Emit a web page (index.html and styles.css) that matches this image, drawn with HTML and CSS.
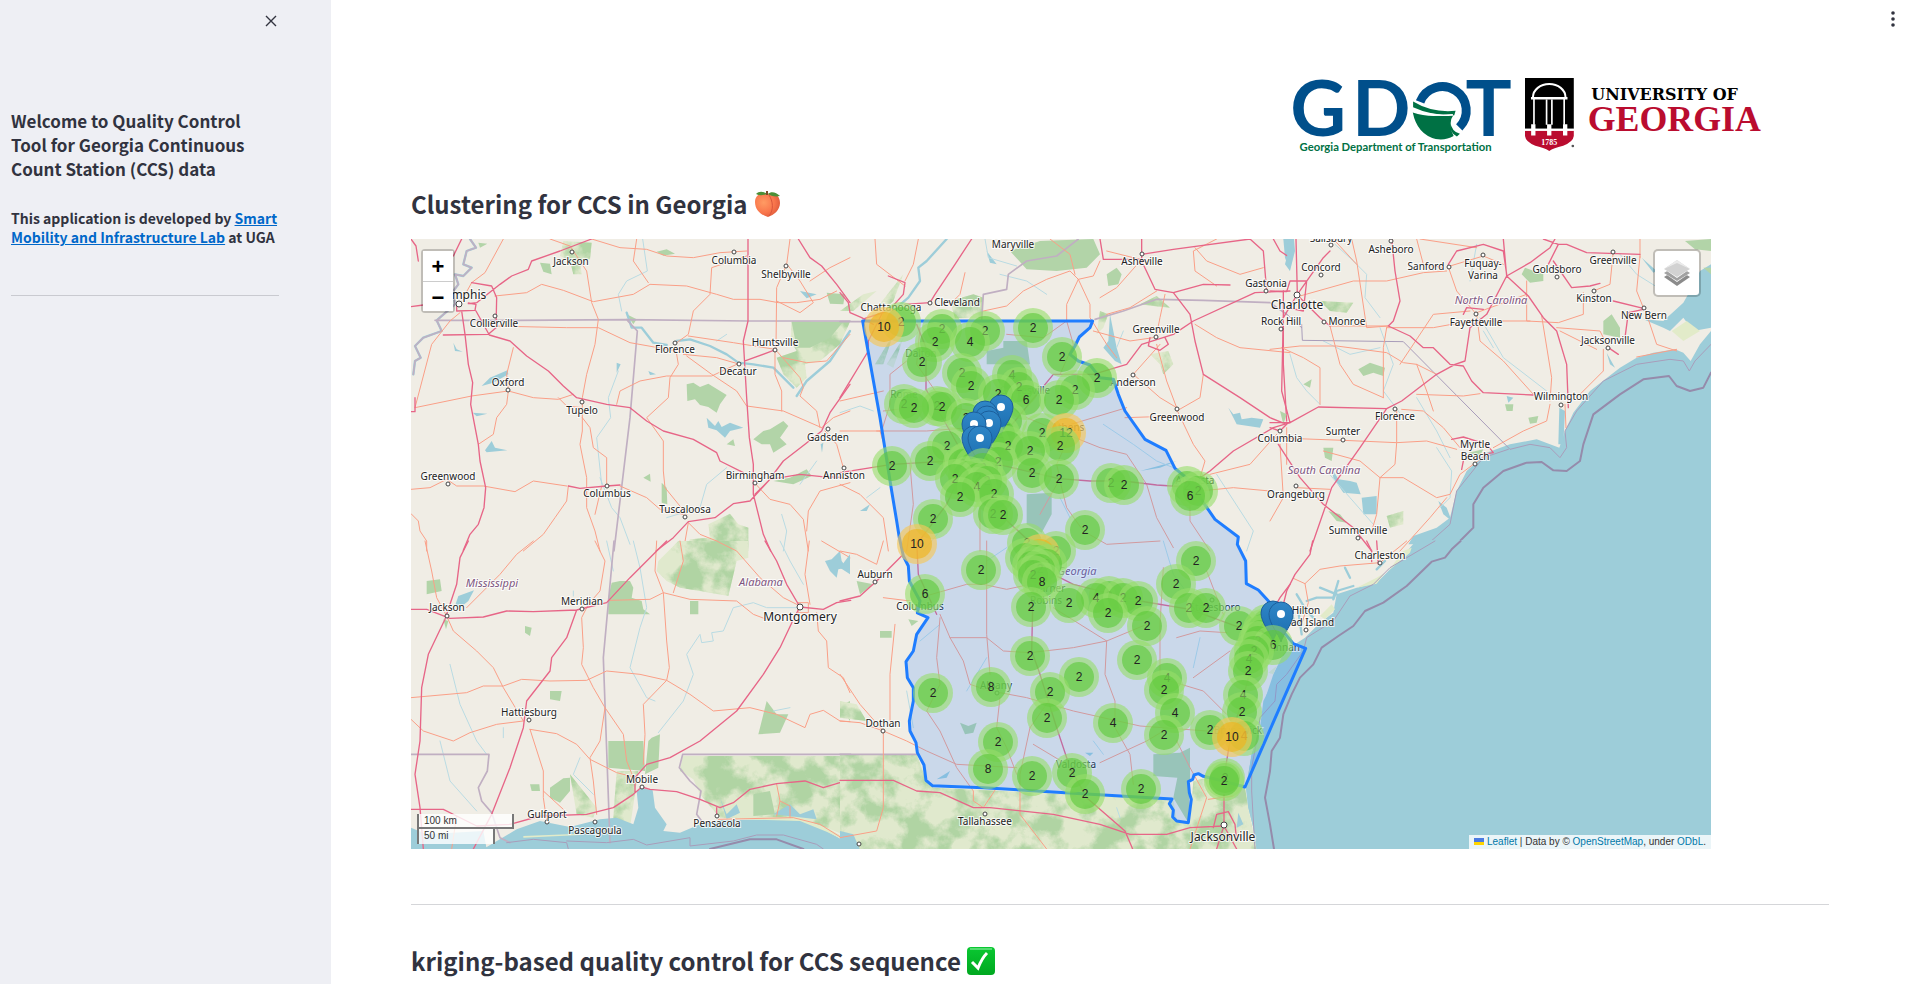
FILE: index.html
```html
<!DOCTYPE html>
<html lang="en">
<head>
<meta charset="utf-8">
<title>Quality Control Tool for Georgia CCS data</title>
<meta name="viewport" content="width=device-width, initial-scale=1">
<link rel="stylesheet" href="styles.css">
</head>
<body>
<div class="app">
  <aside class="sidebar">
    <div class="sidebar-top">
      <button class="icon-button" type="button" aria-label="Close sidebar">
        <svg viewBox="0 0 12 12" width="12" height="12"><path d="M1 1 11 11M11 1 1 11" stroke="#31333f" stroke-width="1.4" fill="none"/></svg>
      </button>
    </div>
    <div class="sidebar-body">
      <h2 class="sidebar-title">Welcome to Quality Control Tool for Georgia Continuous Count Station (CCS) data</h2>
      <p class="credit">This application is developed by <a href="#lab">Smart Mobility and Infrastructure Lab</a> at UGA</p>
      <hr class="rule">
    </div>
  </aside>

  <main class="main">
    <div class="toolbar">
      <button class="icon-button" type="button" aria-label="Main menu">
        <svg viewBox="0 0 4 16" width="4" height="16" fill="#31333f"><circle cx="2" cy="2" r="1.8"/><circle cx="2" cy="8" r="1.8"/><circle cx="2" cy="14" r="1.8"/></svg>
      </button>
    </div>

    <div class="content">
      <div class="logos">
        <svg class="logo-gdot" viewBox="36 36 650 235" role="img" aria-label="GDOT">
          <g class="gdot-letters"><text x="32" y="215">G</text><text x="218" y="215">D</text><text x="560" y="215">T</text></g>
          <path d="M423 111A72 72 0 1 1 541 188" fill="none" stroke="#004f8b" stroke-width="27"/>
          <path d="M402 110Q460 145 530 138L526 151Q455 152 402 127Z" fill="#007144"/>
          <path d="M401 143Q455 162 526 146Q504 176 524 214Q500 228 470 223Q414 208 401 143Z" fill="#007144"/>
          <path d="M514 172Q518 200 543 207L534 215Q510 204 514 172Z" fill="#007144"/>
          <path d="M402 134Q450 156 522 150" fill="none" stroke="#fff" stroke-width="5"/>
          <text class="gdot-name" x="60" y="259">Georgia Department of Transportation</text>
        </svg>
        <svg class="logo-uga" viewBox="734 36 710 235" role="img" aria-label="University of Georgia">
          <path d="M735 39H882V192H735Z"/>
          <path d="M735 198H882V214Q880 232 850 243Q820 250 808 259Q796 250 766 243Q737 232 735 214Z" fill="#ba0c2f"/>
          <g fill="none" stroke="#fff">
            <path d="M735 195H882" stroke-width="6"/>
            <path d="M759 97A49 40 0 0 1 857 97" stroke-width="6"/>
            <path d="M753 100H863" stroke-width="7"/>
            <path d="M762 100V180M853 100V180M800 104V180M816 104V180" stroke-width="5"/>
            <path d="M760 178V212M808 178V212M856 178V212" stroke-width="13"/>
          </g>
          <text class="uga-year" x="808" y="241">1785</text>
          <circle cx="879" cy="244" r="4" fill="#555"/>
          <text class="uga-top" x="935" y="104">UNIVERSITY OF</text>
          <text class="uga-main" x="924" y="200">GEORGIA</text>
        </svg>
      </div>

      <h1 class="heading">Clustering for CCS in Georgia
        <svg class="emoji" viewBox="0 0 28 28" role="img" aria-label="peach">
          <defs><radialGradient id="peach" cx=".35" cy=".4" r=".7"><stop offset="0" stop-color="#ff9b63"/><stop offset=".6" stop-color="#f9764c"/><stop offset="1" stop-color="#dd5a3c"/></radialGradient></defs>
          <path d="M14 4C20 1 26 6 26 13C26 20 20 25 14 27C7 25 1 20 1 12C1 5 8 1 14 4Z" fill="url(#peach)"/>
          <path d="M15 5C19 11 20 20 15 26" stroke="#d9553b" fill="none"/>
          <path d="M13 4C9 1 5 1 2 4C6 6 10 5 13 4ZM14 4C17 1 22 2 26 6C21 7 17 6 14 4Z" fill="#4c8f37"/>
          <path d="M13 5V1" stroke="#7b4b2a" stroke-width="2"/>
        </svg>
      </h1>

      <div class="map">
        <svg class="map-canvas" viewBox="0 0 1300 610" preserveAspectRatio="xMidYMid slice" role="img" aria-label="Map of count stations in Georgia">
          <defs>
            <filter id="woods" x="0" y="0" width="1" height="1" color-interpolation-filters="sRGB">
              <feTurbulence type="fractalNoise" baseFrequency=".012" numOctaves="5" seed="7"/>
              <feColorMatrix values="0 0 0 0 .69  0 0 0 0 .83  0 0 0 0 .64  5 0 0 0 -2.1"/>
              <feComposite in2="SourceAlpha" operator="in" result="trees"/>
              <feMerge><feMergeNode in="SourceGraphic"/><feMergeNode in="trees"/></feMerge>
            </filter>
            <linearGradient id="pin-fill" x2="0" y2="1"><stop offset="0" stop-color="#2f86c7"/><stop offset="1" stop-color="#1a6cae"/></linearGradient>
          </defs>
          <rect width="1300" height="610" fill="#f0ede5"/>

          <g class="tile" transform="translate(-11 -8) scale(.33333)">
            <path class="woodland" d="M1175 272H1350L1320 340 1260 390 1215 400 1220 440 1190 470 1150 430 1130 380 1190 360 1172 330ZM925 880L990 848 1015 880 1045 890V960H850L870 925 930 920ZM490 30L575 35 570 85 540 90 545 130 520 130 510 90 480 75Z"/>
            <path class="wood" d="M420 95L450 98 455 130 430 122ZM770 62L800 55 825 68 790 74ZM235 35L262 38 240 50ZM1175 272H1330L1290 320 1230 350 1190 350ZM860 460L880 455 900 468 925 458 980 492 960 520 950 545 925 528 900 522 885 505 862 510ZM1280 185L1335 190 1330 220 1290 218ZM1090 600L1110 595 1150 570 1165 585 1140 620 1160 640 1120 665 1110 640 1085 640 1060 625ZM785 755L800 770 802 820 785 815ZM1120 750L1170 740 1220 715 1235 735 1180 760ZM730 740L750 728 752 752ZM680 250L710 265 700 280ZM980 640L1000 625 1005 645Z"/>
            <path class="lake" d="M245 465L270 440 322 418 325 430 280 455ZM160 335L170 355 188 362 165 360ZM218 545L262 548 230 556ZM255 658L275 630 285 650 322 658 260 664ZM650 395L662 400 650 425ZM920 560L945 585 955 570 965 588 990 575 1030 590 990 600 975 620 950 598 925 590ZM1200 180L1250 190 1220 202ZM745 420L768 430 750 432ZM1262 640L1270 635 1266 665Z"/>
            <path class="river" d="M728 24L742 120 680 150 655 190 665 240M655 420L625 500 632 560 590 620 605 760M600 740L635 830 660 860 690 940M980 710L920 760 900 830 800 860M1250 690L1200 760M1145 850L1160 900 1150 960M980 310L950 330"/>
            <path class="river wide" d="M680 245L695 290 725 290 760 335 800 342M830 330L870 325 930 345 980 370 1015 395 1060 400 1120 410 1180 470"/>
            <path class="river wide" d="M1190 495L1220 450 1290 390 1350 300M210 24L228 50 200 60 190 100 215 110 190 135 165 130 175 160 160 180 165 220 110 268 125 300 70 320 45 345 62 380 45 390 40 430"/>
            <path class="border" d="M210 24L228 50 200 60 190 100 215 110 190 135 165 130 175 160 160 180 165 220 110 268 125 300 70 320 45 345 62 380 45 390 40 430M105 268H345L680 266 1045 270H1350M680 266L712 300 690 560 642 960"/>
            <path class="trunk" d="M310 24L255 125 215 155 190 200M180 245L150 270 95 340 45 530M285 195L380 185 425 160 490 178 580 212 700 190 750 160 860 165 950 190 1000 205 1080 205 1135 215 1190 215 1260 205 1310 180M450 24L510 45 560 120 575 215 595 265 585 340 560 430 547 500V600L540 640 560 740V830L585 900 600 960M575 24L660 50 740 55 800 75 880 80 960 65 1040 60M710 24L700 90 745 155M280 285L500 290 595 290 690 335 830 360M45 530L215 495 325 480 400 500 475 505 520 490M340 350L320 430 325 480 320 520 290 560 280 610 235 640M1040 75L935 110 930 190 880 240 865 310 830 335M865 315L1000 335 1125 355M830 370L835 400 810 440 805 500 740 560 790 630V720L795 770 860 850M650 520L660 480 720 450 800 435 935 435 1010 400M850 370L950 380 1020 400M860 375L935 430 1010 480 1040 525 1150 540 1265 590M1125 360V430L1145 480V540M1130 360L1200 440 1210 470 1200 495 1250 540 1260 590M1170 24L1160 100 1130 170 1128 350M33 775L90 770 140 745 170 765 250 765 345 782 400 750 500 765M505 765L500 810 465 860 430 910 370 960M33 848L55 870 60 900 80 930V960M547 560L570 590 580 650 620 680V765M660 765L740 800 780 835 850 850M605 765L585 850M475 500L500 525 547 530M865 875L850 960M865 875L900 910 1000 950M1065 757L1110 805 1170 820 1210 865 1225 960M1275 600L1310 640 1330 710M1350 755L1260 780 1225 840 1220 900M1130 210L1200 245 1240 215 1200 150 1165 105M1350 80L1290 110 1230 150M1150 380L1220 395 1280 390 1350 310M1265 590L1300 560 1350 540"/>
            <path class="motorway" d="M33 24L48 45 55 90M185 24L160 75M205 218L230 215 300 160 335 135 385 115 395 90 480 60 575 24M215 155L275 165 290 200 288 290 265 310 130 312M33 227L70 222M170 222V240L225 238 228 220 205 216M185 240L195 310 205 400 218 455 212 520 235 640 240 690 257 770 252 830 235 880 210 910 190 958M228 240L268 312 330 330 380 375 445 420 490 465 530 500 620 520 690 530 740 570 790 600 880 625 950 665 960 690 1030 725M1044 24V270L1030 330 1040 500 1048 620 1060 700V790L1070 830 1090 910 1112 960M1350 460L1290 545 1265 600 1215 640 1150 690 1105 750 1050 810 1000 818 945 860 865 872 820 920 768 960M1065 790L1110 745 1200 730 1265 737 1350 740M1195 24L1230 80 1265 105 1310 160 1350 215M505 765L540 772 620 765 660 762M1035 390L1125 357M45 500V542H33"/>
          </g>

          <g class="tile" transform="translate(429 -8) scale(.33333)">
            <path class="wood" d="M510 60L600 30 760 24 780 70 740 110 650 120 560 115ZM800 130L830 110 845 130 835 160 805 165ZM440 360L490 350V330H560L570 400H440ZM560 790L635 785V850L605 905 560 880Z"/>
            <path class="woodland" d="M330 210L400 190 430 200 425 260 345 262ZM95 250L190 130 160 210 110 262ZM780 240L805 250 790 290 770 310ZM0 240L70 190 110 180 40 240ZM105 400L160 310 130 400ZM140 400L190 320 160 410ZM930 370L985 360 1000 400 970 430 960 400ZM900 220L950 195 990 230 940 225Z"/>
            <path class="lake" d="M1165 530L1180 550 1200 545 1205 565 1235 560 1270 565 1260 590 1190 580ZM900 720L1010 690 960 710ZM810 250L830 350 845 400 825 390 790 350 805 330ZM1330 24H1350V120L1335 80ZM440 60L470 100 450 95ZM60 840L90 820 80 840Z"/>
            <path class="river wide" d="M320 24L260 90 235 110 240 150 205 200 170 230"/>
            <path class="river" d="M435 24L445 80 530 105M480 130L560 150 620 190M790 580L880 640 950 690 1005 712M830 350L850 300M0 545L60 525 100 540M80 800L120 770M250 960L300 900M660 800L690 860M1130 730L1240 900 1220 960"/>
            <path class="border" d="M0 272H70M425 268L430 190 500 175 505 130 560 90 650 75 715 24M765 265L850 240 950 205 1090 208 1290 215 1340 250"/>
            <path class="trunk" d="M105 24L110 100 195 165M235 24L220 100 195 150M375 125L360 190 330 220M430 240L500 225 550 180 620 145 690 120 715 145 760 135 780 90M715 145L680 220V270L700 340 660 430M715 145L750 220V260L800 340 830 380M630 24L690 70 705 130M800 60L900 85M1130 24L1060 60 1065 120 1130 165M950 180L870 230 800 250M975 190L960 260 950 310M950 340L980 450 1010 530M1090 430L1080 500 1010 540M880 430L960 500 1010 530M1065 280L1130 320 1200 350 1350 365M855 560L1010 555M1010 535L1060 640 1095 690 1080 740M560 560L680 610 780 650 860 670 920 760 950 860 1000 950M200 390L150 430V520L125 600H0M110 600L260 600 390 590M0 510L130 480M0 760L60 790 130 860 145 960M210 700L220 820 200 960M420 830V960M660 750L680 830 730 900 800 940 960 930M1050 810V870L1110 960M1080 780L1180 770 1290 780M1340 590V700M1310 610L1230 700 1110 730M130 540L300 520 480 560M660 590L860 530M240 290L230 400 300 500M500 310L610 320 680 270M905 85L830 170 780 200M1065 50L1100 90 1200 130 1270 110M150 700L120 600M760 300L870 330 940 320M960 340L880 430M700 590L650 700 660 743 600 850"/>
            <path class="motorway" d="M395 24L345 100 285 190 270 215 195 220M145 135L195 155 190 190 145 240 75 262M0 185L25 215 30 245 65 260 100 280M130 240L85 330V360L0 500M230 280L258 350V475L330 600 380 690M905 24V90L945 175 1000 185 1090 160 1170 162M1350 180L1245 185 1060 270 1000 310 905 340 860 400 760 430 640 430 500 600 380 690M1000 185L1050 250 1065 330 1090 430 1200 500 1290 560 1340 580M780 24L790 85 905 85M905 70L1000 55 1230 24M1230 24L1270 60 1280 180M1330 180V400L1340 570M1350 575L1300 590 1180 660 1110 720 1040 768 950 762 850 750H750L657 743 475 700 330 690 155 700 0 725M930 320L925 345 960 358 985 340 975 320M380 690L320 820 230 940M420 700L480 850 600 960M1300 24L1320 60 1350 80"/>
          </g>

          <g class="tile" transform="translate(859 -8) scale(.33333)">
            <path class="ocean" d="M1323 300L1290 340 1262 390 1240 365 1215 355 1150 365 1100 380 1050 410 960 480 910 545 885 600 868 650 800 625 720 640 650 665 590 720 560 780 540 860 500 890 430 915 415 940H1323Z"/>
            <path class="ocean" d="M1323 100L1290 120 1260 180 1240 215 1180 270 1120 265 1180 290 1200 300 1240 260 1270 300 1323 290ZM1115 80L1160 120 1150 125ZM50 24H72L75 60 60 120 45 100 55 60ZM185 710L205 745 240 750 260 755 272 790 220 785 190 740ZM275 800L320 795V850L280 850ZM710 495L730 500 715 515ZM505 810L530 830 545 870 520 850ZM1010 365L1035 410 1020 400ZM868 530L885 540 880 640 865 640Z"/>
            <path class="wood" d="M765 110L820 130V150L780 155 755 130ZM1000 270L1025 250 1050 290V320L1000 310ZM265 415L300 395 345 410 340 435 310 425 280 435ZM160 650L190 650 185 690 165 680ZM775 560L805 555 800 575 780 578ZM1245 30L1323 24V60L1275 55ZM705 520L730 520 728 540 710 540ZM595 665L640 655 630 675ZM100 460L125 445 120 470ZM175 840L210 850 230 875 200 870ZM30 540L50 550 40 580ZM1300 110L1323 110V130Z"/>
            <path class="woodland" d="M350 855L400 840V880L360 890ZM150 210L250 215 230 245 180 240Z"/>
            <path class="sand" d="M1205 300L1250 270 1290 300 1240 330Z"/>
            <path class="river" d="M195 40L250 90 290 130 285 200 330 260M330 290L370 400 340 480 400 560M620 40L600 150M630 260L700 380 830 480M60 370L80 440 110 480 150 520M500 650L545 720 540 800 510 830M1050 70L1100 130 1180 180M440 500L500 600 540 680M160 330L240 370 330 350M640 300L670 350M310 880L240 800 170 720"/>
            <path class="border thin" d="M95 280L97 328 400 332 720 655 780 640 840 650 870 680 890 650 885 600 920 540 1000 450 1100 400 1200 385 1240 390 1258 420 1275 390 1323 340M715 655L640 680 560 780 540 880 450 960M45 245L95 290"/>
            <path class="border sea" d="M545 958L570 930 610 890V820L640 770 700 720 770 695 815 693 850 718 890 720 930 690 940 640 970 550 1050 490 1120 445 1197 435 1220 465 1260 480 1300 470 1323 425"/>
            <path class="trunk" d="M90 195L250 150 350 150 460 125 530 120M245 24L260 90 290 290 355 285M440 24L460 100 520 110M535 108L560 180 615 245M620 250L630 330 700 390 790 490M770 150V270L865 275 940 250V185M1110 75L1100 180 1120 230M1125 235L1160 340 1220 360M1220 355L1100 378M1000 355V420L930 490M860 290L990 300 1015 350M640 270L780 270M0 355L90 345 200 345 350 365 400 395 440 400 500 430M180 285L210 400 250 460 340 500M350 290L340 350V500M35 350L100 380 150 410V520M0 620L220 628 380 635 470 630 560 655M380 535V635L375 700 330 740M395 535L460 540 520 590 570 650M440 490L580 495 630 488M840 520L830 570 760 600 670 650M160 660L270 690 330 740 400 740 500 800 540 790 570 730 650 670M80 770L180 775M330 740L320 850 305 900M885 520L888 590M0 870L40 800 30 640M440 400L470 480 490 540M530 800L480 860 390 960M390 400L490 250 600 240M180 285L355 285M620 245L770 190M540 105L640 75 700 100M350 290L490 290 600 270M815 255L845 440 840 510M190 24L260 100M450 24L620 50M1030 60L1020 160 970 180M980 355L870 300M1110 24V80"/>
            <path class="motorway" d="M78 24L82 190 40 260 35 480 60 575M0 575H60L145 528 350 533 395 510 500 430 555 400 585 390 600 290 650 250 710 135 780 95 840 50 855 24M365 24L375 120 390 210 370 270 355 285 420 315 460 350 490 350 540 400 580 405 605 450 640 485 790 492M350 533L270 650 185 770 165 830 120 960M700 24L710 135 775 195 820 260 860 300 890 400 895 530M865 40H890L950 65 1110 70M835 100L865 40 820 24M535 100L560 60 640 40 700 60 710 130M25 640L90 740 160 820 250 890 305 960M0 180L50 182 60 150 110 150 100 240 50 230M82 190L160 80 180 60M90 200L150 260 180 285M850 90L905 170 960 165 990 157M1030 210L1120 232M1120 235L1075 245 1065 320M545 625L580 618 650 640 670 665 640 670M1045 370L1015 350M0 590L30 600 50 580M580 250L590 230 640 235M580 690L575 715"/>
          </g>

          <g class="tile" transform="translate(-11 302) scale(.33333)">
            <path class="woodland" d="M848 645H1352V890L1280 860 1200 835 960 830 900 760 880 715 840 690Z"/>
            <path class="woodland" d="M835 0H1045V50L1010 60 985 165 900 150 840 140 800 120 770 90 775 60ZM650 690H715L690 860 640 830ZM510 700L590 800 580 830 530 820Z"/>
            <path class="wood" d="M635 125L660 120 690 120 700 140 695 170 725 180 730 205 750 220H625V170ZM870 180H895V220H870ZM625 600L730 600 735 690 625 680ZM745 600L755 590 780 580 775 680 735 700ZM450 740L490 712 510 710V750L480 785 450 770ZM390 730H418L420 750H395ZM1080 560L1100 480 1130 520 1165 520 1140 575 1075 580ZM450 450L485 450 480 480 450 475ZM375 255L395 260 390 285 375 275ZM80 120L120 115 125 150 80 160ZM1320 495L1350 480V540ZM33 870L60 890V924H33ZM130 235L145 240 138 265ZM1060 760L1110 750 1125 820 1060 825Z"/>
            <path class="ocean" d="M250 924L350 865 420 840 510 858 600 835 650 830 700 850 715 800 710 750 725 742 758 748 765 800 800 850 790 870 840 875 900 850 960 838 1100 835 1200 838 1280 870 1350 910V926H320ZM33 860L80 880 250 870 260 924H33ZM165 195L175 165 222 148 205 180 180 200ZM1275 60L1295 55 1320 30 1325 60 1340 80 1315 85 1310 110 1290 90ZM960 770L980 820 1010 790 1020 815 980 835ZM1120 820L1170 790 1200 820 1240 805 1250 835ZM1335 870H1350V890Z"/>
            <path class="sand" d="M960 832L1100 828 1200 830 1290 865 1350 900V906L1280 872 1200 840 1100 837ZM370 885L540 878V882L370 890Z"/>
            <path class="river" d="M700 0L720 80 740 200 720 260 690 380 740 470 765 480M775 575L850 480 880 400 860 340 900 280 905 305 940 300 935 275 970 270 1000 200 1060 185 1100 200 1190 200M150 370L180 490 230 600 260 640M120 600L150 720 230 810M540 650L520 700 580 760M1140 0L1170 60 1210 130M620 0L640 90M1170 500L1120 510M310 560V590M520 150V165"/>
            <path class="border" d="M642 0L610 350 630 905M33 640H267L262 690 235 740 245 780 275 815 300 890 330 905M848 640H1352M848 640L838 680 870 720 903 750 890 820 905 840"/>
            <path class="border thin" d="M320 905L400 895 500 905 505 924M500 900L620 905 700 895 740 912 870 890V915L1000 900 1070 882 1150 882 1250 910 1270 924"/>
            <path class="border sea" d="M930 924L1050 895 1130 895 1210 924"/>
            <path class="trunk" d="M75 0L95 90 110 170 140 225 160 270 230 330 280 380 310 440 370 540M400 0L350 40 300 100 200 200M585 0L615 60 600 150 565 190 545 230 550 320 545 370 580 440 615 500 600 600 570 650 580 720 590 820M33 470L200 455 250 435 310 435 365 415 450 420 560 418 620 390 720 400 800 418 870 460 940 510 1050 500 1130 520 1215 560 1230 520 1270 508 1320 540 1350 542M630 178L750 175 790 155 870 175 1010 180 1060 220 1100 235M770 0L765 90 790 155 800 300 808 380 800 418 730 490 735 580 730 670M840 0L850 60 820 155M950 0L1010 30 1080 110 1150 170 1190 190M33 535L70 570 160 600 210 575 290 550 370 540M390 565L470 578 530 610 570 655 650 695 710 710M390 565L430 690V770L440 840M430 750L490 805M615 500L670 580 680 660 700 710M1228 0L1215 100 1230 190M1250 215L1255 270 1280 300 1285 380 1330 410 1350 455M955 835L1180 830 1260 850 1350 906M1130 730L1140 780 1130 825M1140 780L1170 795V830M1265 0L1350 50M170 825L155 924M1195 185H1225V215H1195Z"/>
            <path class="motorway" d="M205 0L180 50 170 130 150 190 135 235 85 340 65 440 60 600 45 700 60 800 70 924M33 205H80L150 232 250 228 320 210 400 212 530 207 620 185 690 110 800 0M530 207L500 290 455 350 450 390 380 480 370 560 330 680 275 820 220 924M33 805H130L170 825 230 855 330 850 420 825 560 820 640 800 700 760 725 738 750 745 830 752 900 775 960 800 1000 785 1050 745 1130 728 1215 720 1270 740 1352 715M705 755V710L740 670 810 650 900 600 1010 510 1090 400 1140 320 1185 225 1200 198 1160 130 1130 60 1095 0M1200 198L1270 205 1310 185 1352 178M950 800V825"/>
          </g>

          <g class="tile" transform="translate(429 302) scale(.33333)">
            <path class="woodland" d="M0 640H230L260 720 280 740 1000 775 1010 840 1050 845 1060 720 1100 710 1215 740 1225 800 1250 926H60L0 880ZM0 480L50 490 80 540 0 530Z"/>
            <path class="wood" d="M940 640L1020 635 1050 620V720L1045 845 1000 770 1012 710 940 705ZM360 545L385 555 410 545 400 575 375 580ZM120 270H155V290H120ZM205 235L235 240 215 255ZM50 120L100 130 60 160Z"/>
            <path class="lake" d="M1360 310L1330 340 1300 400 1280 460 1262 560 1235 640 1218 740 1225 800 1240 860 1250 926H1400V310ZM0 870L40 880 60 926H0ZM735 635L760 635 750 645ZM290 715L330 690 320 710ZM0 80L30 40 30 100ZM1195 815L1210 850 1190 860Z"/>
            <path class="river" d="M970 0L1000 100 1060 180M1080 290L1060 380M830 800L840 830M200 450L220 560M440 350L380 450M760 600L790 640M300 250L240 300M500 20L440 60"/>
            <path class="border" d="M0 640H230"/>
            <path class="trunk" d="M0 30L50 40 110 70 130 0M0 400L60 490 130 570M0 540L60 545 130 570 200 600 260 630 350 670 530 680M130 570V800L110 870 0 890M165 250L150 400V540M300 230L290 350 300 430 260 510 300 570 350 680 400 750V780L430 800M240 170L380 130H430L500 145 570 130M300 220L330 290 370 360 390 430 450 450M330 290H440L490 330 570 335 700 320 800 300M480 455L560 470 700 510 900 555 1100 570M440 0V280L450 400M570 560L540 700V820L620 924M800 300L795 400 825 480V560L870 640 880 730M640 200L720 250 800 300 920 250M780 665L920 600 970 570M970 80L960 250V400M1100 90L1150 220M1170 330L1060 410M1010 600L1050 680 1100 770 1050 924M1105 775L1180 765M1010 290L1080 270 1160 275M580 610L680 670M990 420L1090 450 1160 520M480 470L470 560 500 620 530 700M430 800L470 740M130 170L210 180M570 560L640 460"/>
            <path class="motorway" d="M0 180L60 165 110 120 190 40M0 718H160L230 750 300 755 400 800H450L640 820 780 850 870 880H980L1050 860 1150 855M878 924L855 870 740 770 690 680 650 560 600 400 575 330 578 200M620 90L700 130 900 180 1050 205 1200 260M1152 760V855L1190 924M1120 860L1130 820 1165 812 1185 850 1190 900M230 0L235 100 290 220M1150 720L1170 600 1220 430 1260 280 1320 170 1350 130M1130 924L1150 860"/>
          </g>

          <g class="tile" transform="translate(859 302) scale(.33333)">
            <path class="ocean" d="M440 -3L420 20 350 95 320 125 260 140 200 160 190 215 150 245 105 290 75 310 40 350 10 420 -20 480 -30 560 -55 640 -72 740 -65 800 -50 860 -40 926H1323V-3Z"/>
            <path class="sand" d="M355 90L400 30 425 20 420 35ZM260 140L320 110 345 95 320 128ZM150 225L185 190 195 205 165 235ZM-5 395L20 375 10 400Z"/>
            <path class="river wide" d="M200 160L150 140M190 170L205 120M240 110L225 80M80 160L110 210 130 230M110 180L140 170 190 170M320 85L345 60M75 250L60 200M95 280L85 210M250 135L200 150 190 175"/>
            <path class="border thin" d="M495 0L360 80 310 130 240 165 190 240 110 290 100 330 50 400 20 430 15 480 -30 530 -40 600 -55 680V750L-45 924"/>
            <path class="border sea" d="M572 0L545 25 525 50 485 62 410 135 340 185 285 210 250 255 205 285 155 320 130 370 90 410 65 460 40 520 30 590 5 630 0 690 -15 770 0 850 12 924"/>
            <path class="trunk" d="M410 0L330 65 210 75 150 85 105 128 115 185 95 250M105 128L70 112"/>
            <path class="motorway" d="M128 0L120 40 75 100 50 150 40 190M290 0L305 30V62M325 70L320 0"/>
          </g>

          <g id="towns"></g>
          <path class="state" transform="translate(429 -8) scale(.33333)" d="M68 270H758L750 290 718 318 705 345 690 370 715 390 750 402 780 440 820 445 835 490 855 540 915 625 978 658 1005 712 1045 745 1080 800 1125 865 1195 918 1192 940 1217 990 1219 1058 1255 1077 1290 1115 1320 1190 1360 1238 1397 1252 1215 1668 1150 1650 1090 1636 1075 1628 1062 1632 1058 1645 1045 1652 1048 1685 1054 1705 1045 1775 1010 1770 998 1758 1000 1738 988 1718 996 1704 700 1687 430 1670 277 1664 258 1648 252 1602 232 1565 228 1535 210 1500 208 1470 220 1410 220 1370 202 1340 198 1292 220 1260 230 1210 264 1160 232 1146 240 1110 208 1050 205 1005 190 975 178 920 170 870 155 780 120 560Z"/>
          <g id="markers"></g>
        </svg>

        <div class="zoom-control">
          <button type="button" aria-label="Zoom in">+</button>
          <button type="button" aria-label="Zoom out">−</button>
        </div>
        <button class="layers-control" type="button" aria-label="Layers">
          <svg viewBox="0 0 26 26" width="26" height="26">
            <path d="M0 17L13 9 26 17 13 26Z" fill="#8b8b8b"/><path d="M0 13L13 5 26 13 13 22Z" fill="#fff"/>
            <path d="M0 13L13 5 26 13 13 21Z" fill="#a2a2a2"/><path d="M0 9L13 1 26 9 13 18Z" fill="#fff"/>
            <path d="M0 9L13 0 26 9 13 17Z" fill="#d2d2d2"/><path d="M0 9L13 0 26 9 13 3Z" fill="#ebebeb"/>
          </svg>
        </button>
        <div class="scale-control">
          <div class="scale-line scale-km">100 km</div>
          <div class="scale-line scale-mi">50 mi</div>
        </div>
        <div class="attribution">
          <svg viewBox="0 0 10 7" width="10" height="7"><path d="M0 0H10V4H0Z" fill="#4c7be1"/><path d="M0 4H10V7H0Z" fill="#ffd500"/></svg>
          <a href="#leaflet">Leaflet</a> | Data by © <a href="#osm">OpenStreetMap</a>, under <a href="#odbl">ODbL</a>.
        </div>
      </div>

      <hr class="rule section-rule">
      <h2 class="heading">kriging-based quality control for CCS sequence
        <svg class="emoji" viewBox="0 0 28 28" role="img" aria-label="check mark">
          <defs><linearGradient id="tick" x2="0" y2="1"><stop offset="0" stop-color="#0ac832"/><stop offset="1" stop-color="#00a820"/></linearGradient></defs>
          <rect width="28" height="28" rx="4" fill="url(#tick)"/><path d="M3 2H25" stroke="#6ee487" stroke-width="1.5"/>
          <path d="M5 15L11 21Q15 11 20 6" fill="none" stroke="#fff" stroke-width="3"/>
        </svg>
      </h2>
    </div>
  </main>
</div>
<script src="map.js"></script>
</body>
</html>
```
FILE: styles.css
```css
* { box-sizing: border-box; }
body {
  margin: 0;
  color: #31333f;
  background: #fff;
  font-family: "Noto Sans CJK SC", "Noto Sans CJK JP", "Noto Sans", sans-serif;
}
.app { display: flex; min-height: 100vh; }
.icon-button { display: flex; align-items: center; justify-content: center; width: 24px; height: 24px; padding: 0; border: 0; background: none; }

.sidebar { flex: 0 0 331px; background: #eeeff4; }
.sidebar-top { display: flex; justify-content: flex-end; padding: 9px 48px 0 0; }
.sidebar-body { padding: 76px 52px 0 11px; }
.sidebar-title { margin: 0; font-size: 17px; line-height: 24px; font-weight: 700; }
.credit { margin: 28px 0 0; font-size: 14px; line-height: 19px; font-weight: 700; }
.credit a { color: #0068c9; }
.rule { height: 1px; margin: 48px 0 0; border: 0; background: #c9cad0; }

.main { flex: 1; min-width: 0; }
.toolbar { display: flex; justify-content: flex-end; padding: 7px 0 0; }
.content { padding: 46px 76px 0 80px; }
.logos { display: flex; justify-content: flex-end; gap: 16px; padding-right: 68px; }
.logo-gdot { width: 217px; height: 78px; overflow: visible; }
.logo-uga { width: 237px; height: 78px; overflow: visible; }
.gdot-letters { font: 700 232px Lato, sans-serif; fill: #004f8b; }
.gdot-name { font: 700 34px Lato, sans-serif; fill: #007144; }
.uga-year { font: 700 24px "Liberation Serif", serif; fill: #fff; text-anchor: middle; }
.uga-top { font: 700 48px "DejaVu Serif", serif; fill: #000; }
.uga-main { font: 700 108px "Liberation Serif", serif; fill: #ba0c2f; }

.heading { display: flex; align-items: center; gap: 6px; margin: 0; font-size: 24px; line-height: 34px; font-weight: 700; }
.logos + .heading { margin-top: 32px; }
.emoji { width: 28px; height: 28px; }
.section-rule { margin: 55px 0 39px; background: #d5d6d9; }

.map { position: relative; width: 100%; max-width: 1300px; margin-top: 18px; aspect-ratio: 130 / 61; overflow: hidden; font: 10px/14px "Liberation Sans", Arial, sans-serif; color: #333; }
.map-canvas { display: block; width: 100%; height: 100%; }
.tile path { stroke-linejoin: round; stroke-linecap: round; }
.wood { fill: #b2d4a8; }
.woodland { fill: #e0e9cd; filter: url(#woods); }
.lake, .ocean { fill: #9dcdd9; }
.sand { fill: #e2ebc9; }
.river { fill: none; stroke: #b9dbe3; stroke-width: 3; }
.river.wide { stroke: #9dcdd9; stroke-width: 7; }
.border { fill: none; stroke: #c0afc2; stroke-width: 5; }
.border.thin { stroke: #a99dba; stroke-width: 3; }
.border.sea { stroke: #958bab; stroke-width: 6; }
.trunk { fill: none; stroke: #fa9f87; stroke-width: 3; }
.motorway { fill: none; stroke: #e76587; stroke-width: 4; }
.state { fill: #3388ff; fill-opacity: .2; stroke: #1f7dff; stroke-width: 9; stroke-linejoin: round; }
.town { font: 10px "Noto Sans", sans-serif; fill: #222; stroke: #fff; stroke-opacity: .8; stroke-width: 2px; paint-order: stroke; text-anchor: middle; }
.town.city { font-size: 12px; }
.town.region { font-size: 11px; font-style: italic; fill: #7d5580; }
.dot { fill: #fff; stroke: #444; }
.count { font: 12px "Liberation Sans", Arial, sans-serif; fill: #222; text-anchor: middle; }
.small-outer { fill: rgba(150, 222, 105, .6); }
.small-inner { fill: rgba(90, 200, 55, .6); }
.mid-outer { fill: rgba(245, 200, 90, .65); }
.mid-inner { fill: rgba(240, 180, 30, .65); }
.pin { fill: url(#pin-fill); stroke: #1c5f9c; }

.zoom-control { position: absolute; top: 10px; left: 10px; width: 34px; border: 2px solid rgba(0, 0, 0, .2); border-radius: 4px; background-clip: padding-box; }
.zoom-control button { display: block; width: 30px; height: 30px; padding: 0; border: 0; background: #fff; color: #000; font: 700 22px/32px "Liberation Sans", Arial, sans-serif; }
.zoom-control button + button { border-top: 1px solid #ccc; }
.layers-control { position: absolute; top: 10px; right: 10px; display: flex; align-items: center; justify-content: center; width: 48px; height: 48px; padding: 0; border: 2px solid rgba(0, 0, 0, .2); border-radius: 5px; background: #fff; background-clip: padding-box; }
.scale-control { position: absolute; left: 6px; bottom: 5px; }
.scale-line { height: 15px; padding-left: 5px; border: 2px solid #777; border-top: 0; background: rgba(255, 255, 255, .8); }
.scale-km { width: 97px; }
.scale-mi { width: 78px; border-bottom: 0; }
.attribution { position: absolute; right: 0; bottom: 0; padding: 0 5px; background: rgba(255, 255, 255, .8); white-space: nowrap; }
.attribution a { color: #0078a8; text-decoration: none; }
```
FILE: map.js
```js
// Coordinates inside a tile are at three times map size; each tile has its map origin.
const SVG = "http://www.w3.org/2000/svg";
const tiles = [
  { x: -11, y: -8,
    towns: [[514,101,"Jackson"],[1002,98,"Columbia"],[1158,141,"Shelbyville"],[283,289,"Collierville"],[180,203,"Memphis","city"],[826,367,"Florence"],[1124,346,"Huntsville"],[1015,431,"Decatur"],[323,466,"Oxford"],[546,549,"Tupelo"],[1283,630,"Gadsden"],[143,746,"Greenwood"],[621,799,"Columbus"],[1065,745,"Birmingham"],[856,846,"Tuscaloosa"],[1331,744,"Anniston"]],
    dots: [[516,63],[1002,63],[1158,105],[285,256],[177,219,1],[825,336],[1124,357],[1017,398],[324,478],[546,513],[1284,594],[144,759],[621,765],[1065,756],[855,858],[1332,711]] },
  { x: 429, y: -8,
    towns: [[518,50,"Maryville"],[906,101,"Asheville"],[1278,168,"Gastonia"],[153,240,"Chattanooga"],[351,226,"Cleveland"],[948,305,"Greenville"],[880,466,"Anderson"],[1012,569,"Greenwood"],[243,378,"Dalton"],[192,500,"Rome"],[685,600,"Athens"],[555,488,"Gainesville"],[1065,760,"Augusta"]],
    dots: [[906,69],[1278,180],[270,216],[948,318],[879,432],[1011,534]],
    clusters: [[183,272,2],[578,290,2],[132,288,10],[306,295,2],[435,300,2],[285,332,2],[390,334,4],[666,377,2],[246,392,2],[366,425,2],[515,433,4],[771,440,2],[393,464,2],[537,468,2],[474,490,2],[705,476,2],[558,506,6],[657,506,2],[192,520,2],[222,530,2],[290,525,2],[305,527,2],[378,560,2],[500,570,2],[480,610,2],[606,605,2],[678,607,12],[320,645,2],[450,640,2],[505,645,2],[660,646,2],[570,661,2],[270,689,2],[475,692,2],[155,704,2],[385,690,2],[370,700,2],[405,705,2],[430,712,2],[576,725,2],[657,743,2],[344,745,2],[385,735,2],[415,740,2],[410,768,4],[440,750,2],[813,755,2],[852,761,2],[1040,765,2],[1073,781,2],[360,797,2],[462,788,2],[1050,794,6],[459,848,2],[489,851,2],[279,863,2],[735,896,2],[561,935,2],[231,940,10]],
    pins: [[434,545],[442,560],[484,528],[403,580],[447,576],[403,621],[421,622]] },
  { x: 859, y: -8,
    towns: [[183,32,"Salisbury"],[363,65,"Asheboro"],[154,119,"Concord"],[82,234,"Charlotte","city"],[33,281,"Rock Hill"],[230,283,"Monroe"],[469,118,"Sanford"],[640,108,"Fuquay-"],[640,143,"Varina"],[861,126,"Goldsboro"],[1030,98,"Greenville"],[973,213,"Kinston"],[1121,265,"New Bern"],[1014,339,"Jacksonville"],[619,285,"Fayetteville"],[873,508,"Wilmington"],[376,567,"Florence"],[219,613,"Sumter"],[30,634,"Columbia"],[616,651,"Myrtle"],[616,687,"Beach"],[78,801,"Orangeburg"],[264,908,"Summerville"],[663,218,"North Carolina","region"],[161,729,"South Carolina","region"]],
    dots: [[183,43],[363,31],[153,132],[81,192,1],[33,294],[162,273],[537,108],[639,72],[861,138],[1029,63],[972,180],[1122,231],[1014,351],[618,249],[873,522],[375,534],[219,627],[30,600],[615,699],[78,765],[264,921]] },
  { x: -11, y: 302,
    towns: [[275,137,"Mississippi","region"],[1083,135,"Alabama","region"],[141,211,"Jackson"],[546,191,"Meridian"],[1200,241,"Montgomery","city"],[386,524,"Hattiesburg"],[726,727,"Mobile"],[440,830,"Gulfport"],[585,878,"Pascagoula"],[951,858,"Pensacola"]],
    dots: [[141,225],[546,204],[1200,198,1],[387,537],[726,738],[441,843],[585,843],[951,825]] },
  { x: 429, y: 302,
    towns: [[105,111,"Auburn"],[240,206,"Columbus"],[130,557,"Dothan"],[434,852,"Tallahassee"],[1150,900,"Jacksonville","city"],[712,103,"Georgia","region"],[625,152,"Warner"],[618,189,"Robins"],[468,444,"Albany"],[707,682,"Valdosta"],[1195,580,"Brunswick"],[1125,210,"Statesboro"]],
    dots: [[105,123],[129,570],[435,819],[1152,852,1],[1116,177],[57,909],[470,456]],
    clusters: [[600,40,10],[648,30,2],[555,52,2],[590,58,2],[575,75,2],[620,68,2],[600,85,2],[578,103,2],[606,122,8],[1068,60,2],[423,87,2],[255,160,6],[1008,128,2],[572,198,2],[687,186,2],[768,172,4],[806,165,2],[848,172,2],[894,180,2],[803,216,2],[1046,200,2],[1098,200,2],[921,255,2],[1197,254,2],[1280,250,2],[1270,265,2],[1262,282,2],[1255,300,2],[1300,311,6],[1242,330,2],[1227,355,4],[1224,390,2],[570,345,2],[890,357,2],[717,408,2],[981,410,4],[279,456,2],[453,437,8],[630,452,2],[971,446,2],[1005,516,4],[1209,461,4],[621,531,2],[818,546,4],[971,582,2],[1109,567,2],[1206,513,2],[1212,585,4],[1176,587,10],[474,603,2],[444,684,8],[576,705,2],[696,696,2],[735,759,2],[903,744,2],[1155,710,2],[1152,720,2]],
    pins: [[1300,215],[1324,219]] },
  { x: 859, y: 302,
    towns: [[330,53,"Charleston"],[107,220,"Hilton"],[108,256,"Head Island"],[20,330,"Savannah"]],
    dots: [[330,66],[108,267]] }
];

function add(parent, tag, attrs, text) {
  const node = document.createElementNS(SVG, tag);
  for (const key in attrs) node.setAttribute(key, attrs[key]);
  if (text !== undefined) node.textContent = text;
  parent.appendChild(node);
  return node;
}

const townLayer = document.getElementById("towns");
const markerLayer = document.getElementById("markers");
const markers = [];

for (const tile of tiles) {
  const px = v => Math.round(v / 3 + tile.x);
  const py = v => Math.round(v / 3 + tile.y);
  for (const [x, y, big] of tile.dots) {
    add(townLayer, "circle", { class: "dot", cx: px(x), cy: py(y), r: big ? 3 : 2 });
  }
  for (const [x, y, name, kind] of tile.towns) {
    add(townLayer, "text", { class: "town " + (kind || ""), x: px(x), y: py(y) }, name);
  }
  for (const [x, y, count] of tile.clusters || []) {
    markers.push({ x: px(x), y: py(y), count });
  }
  for (const [x, y] of tile.pins || []) {
    markers.push({ x: px(x), y: py(y) + 28 });
  }
}

// Markers further south lie on top.
markers.sort((a, b) => a.y - b.y);
for (const m of markers) {
  const g = add(markerLayer, "g", { transform: `translate(${m.x} ${m.y})` });
  if (m.count) {
    const size = m.count < 10 ? "small" : "mid";
    add(g, "circle", { class: size + "-outer", r: 20 });
    add(g, "circle", { class: size + "-inner", r: 15 });
    add(g, "text", { class: "count", y: 4 }, m.count);
  } else {
    add(g, "path", { class: "pin", d: "M0 0C-2 -8 -12 -18 -12 -28A12 12 0 0 1 12 -28C12 -18 2 -8 0 0Z" });
    add(g, "circle", { cy: -28, r: 4, fill: "#fff" });
  }
}
```
